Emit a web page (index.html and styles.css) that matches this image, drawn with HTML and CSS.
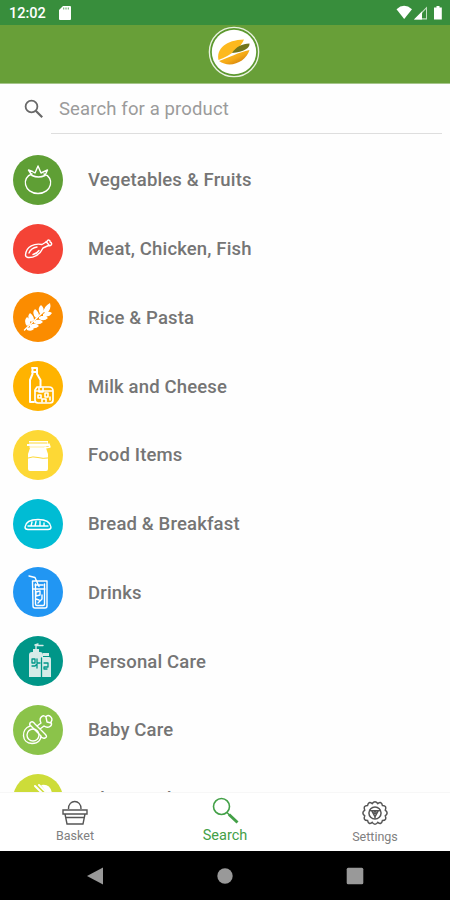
FILE: index.html
```html
<!DOCTYPE html>
<html lang="en">
<head>
<meta charset="utf-8">
<title>Product search</title>
<link rel="stylesheet" href="styles.css">
</head>
<body>
<div class="status">
  <span class="clock">12:02</span>
  <svg class="sd" width="12" height="14" viewBox="0 0 12 14"><path d="M4 0h7q1 0 1 1v12q0 1-1 1H1q-1 0-1-1V4z" fill="#fff"/><path d="M4.7 1.5v2M7 1.5v2M9.3 1.5v2" stroke="#6bab6c" stroke-width="1.1"/></svg>
  <svg class="signals" width="48" height="16" viewBox="0 0 48 16"><path d="M.5 4.2Q8 -2.5 16 4.2L8.2 14z" fill="#fff"/><path d="M18 14.5L31 1.5v13z" fill="#c2dfc2"/><path d="M26 8.2L30 4v9.3h-4z" fill="#388e3c"/><path d="M18 14.5l8-8v8z" fill="#fff"/><path d="M40.500 1h3v1.500h2.300v12h-7.800v-12h2.500z" fill="#fff"/></svg>
</div>
<header class="bar">
  <svg width="52" height="52" viewBox="0 0 52 52">
    <defs><linearGradient id="nut" x1="0" y1="0" x2="1" y2="1"><stop offset="0" stop-color="#ffc62b"/><stop offset=".55" stop-color="#f5a916"/><stop offset="1" stop-color="#b96808"/></linearGradient></defs>
    <circle cx="26" cy="26" r="24.600" fill="#5c982f" stroke="#e9f2e0" stroke-width="1.400"/><circle cx="26" cy="26" r="22.200" fill="#fff"/>
    <path d="M10.500 34C8 23 18 14 36 13.500C33 21 24 29 10.500 34z" fill="#fdb91e"/>
    <path d="M24 27C28 21 34 17.500 41.500 17.500C42 22 36 26 24 27z" fill="#71751c"/>
    <path d="M11 35C20 32 31 26 41.500 24C38 36 22 43 11 35z" fill="url(#nut)"/>
  </svg>
</header>
<main>
  <div class="search">
    <svg width="20" height="20" viewBox="0 0 20 20" fill="none" stroke="#686868"><circle cx="7.500" cy="7.500" r="5.900" stroke-width="1.800"/><path d="M11.700 11.700l6.500 6.500" stroke-width="2.200"/></svg>
    <div class="field">Search for a product</div>
  </div>
  <ul class="list">
    <li><svg class="ic green" viewBox="0 0 50 50"><path d="M19 19C8 22 11 38.500 25 38.500S42 22 31 19M15.500 15l4 1.500 2.500 1.500 3-7 3 7 6.500-3-2.500 5.500q-6.500 3-13 0z"/></svg><span>Vegetables &amp; Fruits</span></li>
    <li><svg class="ic red" viewBox="0 0 50 50"><path d="M12.500 31C13 22 22 19 29 20.500L34 17.500C35 15 37.500 16 37 18C40 19 38.500 22.500 35.500 21.500L30 24C27 31 20 34 15 33.500Q12.500 33 12.500 31zM16 29q2-5 8-6M20 30.500q4-1 6-4M33 17.500l3 3.500"/></svg><span>Meat, Chicken, Fish</span></li>
    <li><svg class="ic orange" viewBox="0 0 50 50"><path d="M11.500 38L33 17"/><g fill="#fff" stroke="none"><path d="M31 20q-1-5 6-9q2 6-4 11zM27 22q-3-6 1-9q4 3 2 8zM23 26q-5-5-1-9q4 3 4 7zM18 30q-5-5-1-9q4 3 4 7zM14 34q-4-5 0-9q4 3 3 7zM30 22q5-4 9-1q-3 5-9 3zM26 25q6-3 9 1q-4 4-9 1zM21 29q6-3 9 1q-4 4-9 1zM17 33q6-3 9 1q-4 4-9 1zM14 36q5-2 7 1q-3 3-7 1z"/></g></svg><span>Rice &amp; Pasta</span></li>
    <li><svg class="ic amber" viewBox="0 0 50 50"><path d="M19 7h5v6l3.500 6v7M21 41h-4V19l2.500-6V7M19 11h5" stroke-width="2"/><path d="M24 26h12q4 0 4 4v9q0 3-3 3H25q-3 0-3-3V29z" stroke-width="1.700"/><path d="M22 30h17M26 27v4h4v-4M25 34h3v3h-3zM32 32v4h3v-4zM29 41v-3h4v3M37 36v3" stroke-width="1.600"/></svg><span>Milk and Cheese</span></li>
    <li><svg class="ic yellow" viewBox="0 0 50 50"><path fill="#fff" stroke="none" d="M16 11h19v4H16zM14 14h22v2H14zM17 18h16l2 6v15q0 2-2 2H17q-2 0-2-2V24z"/><path d="M36 14l1 3-5 1M17 17h16"/><path d="M15 28q5-2 10-.500q5 1.500 10 .500M16 13h18" stroke="#fdd835" stroke-width="1"/></svg><span>Food Items</span></li>
    <li><svg class="ic cyan" viewBox="0 0 50 50"><path d="M12 28q1-7.500 13-7.500t13 7.500q0 2.500-3 2.500H15q-3 0-3-2.500zM15 27h20M18 27l1-4M22 27l1-4.500M27 27v-4.500M31 27v-3"/></svg><span>Bread &amp; Breakfast</span></li>
    <li><svg class="ic blue" viewBox="0 0 50 50"><path d="M19.500 14H34v25q0 2-2 2H22q-2 0-2-2zM22.500 17v20q0 1.500 1.500 1.500h6q1.500 0 1.500-1.500V17M16 9l6 1.500 4 9M20 22h12M23 25l4-1v4l-4 1zM29 28v4l-4 4M23 32l3 1M22 18h8"/></svg><span>Drinks</span></li>
    <li><svg class="ic teal" viewBox="0 0 50 50"><g fill="#d5ebe8" stroke="none"><path d="M16 19q0-3 3-3h8q3 0 3 3v22H16zM20 13h6v3h-6zM28 23q0-2 2-2h6q2 0 2 2v18H28zM30 17h6v3h-6z"/></g><path d="M23 13V9.500h7M22 9l3-1" stroke="#d5ebe8"/><path d="M28.500 22v19M19 23h3v4h-3zM24 23v4h3M19 30h3l2-2v4M31 27h4v4h-4v2h3" stroke="#009688" stroke-width="1.300"/></svg><span>Personal Care</span></li>
    <li><svg class="ic light" viewBox="0 0 50 50"><circle cx="20" cy="30" r="6"/><path d="M17 21C8 24 8 38 19 38.500C26 38.500 28 34 28 31M17 18q2-3 5 1l10 10q3 3 0 4q-3 1-5-3L18 21q-2-1-1-3zM24 21l4-3C25 12 31 9 33 12C35 8 41 13 38 17C40 21 35 24 31 21L27 24M33 12l1 5 4 1"/></svg><span>Baby Care</span></li>
    <li><svg class="ic lime" viewBox="0 0 50 50"><path d="M22 12l8 8M26 11l9 9" stroke-width="2"/><path fill="#fff" stroke="none" d="M28 11q9-2 11 8l-3 2z"/></svg><span>Chips and S</span></li>
  </ul>
</main>
<nav class="tabs">
  <div><svg width="28" height="27" viewBox="0 0 28 27" fill="none" stroke="#555" stroke-width="1.400"><path d="M7.500 10C7 0 20.500 0 20 10M2 11h24v4H2zM4 15l2 10h16l2-10M5 18.500h18"/></svg><span>Basket</span></div>
  <div class="on"><svg width="28" height="28" viewBox="0 0 28 28" fill="none" stroke="#43a047"><circle cx="10.500" cy="9.500" r="8" stroke-width="1.600"/><path d="M16 15.500l3 3" stroke-width="1.500"/><path d="M18 17.500l8.500 8" stroke-width="3"/></svg><span>Search</span></div>
  <div><svg width="28" height="28" viewBox="-1 -1 30 30" fill="none" stroke="#555" stroke-width="1.600"><path d="M11 4q3-4 6 0q4-3 5 2q5 0 3 5q4 3 0 6q2 5-3 5q-1 5-5 2q-3 4-6 0q-4 3-5-2q-5 0-3-5q-4-3 0-6q-2-5 3-5q1-5 5-2z"/><circle cx="14" cy="14" r="6.500"/><path d="M10.500 11.500h7L14 18zM8 11l3 1M20 11l-3 1M14 18v2"/><circle cx="14" cy="13.500" r="1.200"/></svg><span>Settings</span></div>
</nav>
<div class="system">
  <svg width="18" height="18" viewBox="0 0 18 18"><path d="M1 9L17 .500v17z"/></svg>
  <svg width="18" height="18" viewBox="0 0 18 18"><circle cx="9" cy="9" r="7.700"/></svg>
  <svg width="18" height="18" viewBox="0 0 18 18"><rect x=".700" y=".700" width="16.600" height="16.600" rx="1.500"/></svg>
</div>
</body>
</html>
```
FILE: styles.css
```css
* { box-sizing: border-box; }
body { margin: 0; height: 900px; display: flex; flex-direction: column; overflow: hidden; background: #fefefe; font-family: Roboto, sans-serif; }
svg { flex: none; display: block; }
.status { height: 25px; flex: none; display: flex; align-items: center; padding: 1px 7px 0 9px; background: #388e3c; color: #fff; }
.clock { font-size: 14.5px; font-weight: 500; width: 50px; }
.signals { margin-left: auto; margin-right: -1px; }
.bar { height: 59px; flex: none; display: flex; justify-content: center; padding: 1px 0 0 17px; background: #689f38; border-bottom: 1px solid #a5c58a; }
main { flex: 1; min-height: 0; overflow: hidden; }
.search { display: flex; height: 50px; padding: 0 8px 0 24px; }
.search svg { margin-top: 15px; }
.field { flex: 1; margin-left: 7px; padding: 15px 8px 0; font-size: 18.5px; letter-spacing: .13px; line-height: 21px; color: #9b9b9b; border-bottom: 1px solid #dedede; }
.list { list-style: none; margin: 0; padding: 11.6px 0 0 13px; }
.list li { display: flex; align-items: center; height: 68.75px; color: #757575; font-size: 18.5px; font-weight: 500; letter-spacing: .15px; }
.list span { margin-left: 25px; line-height: 22px; padding-top: 1px; }
.ic { width: 50px; height: 50px; border-radius: 50%; fill: none; stroke: #fff; stroke-width: 1.4; stroke-linejoin: round; stroke-linecap: round; }
.green { background: #5f9f35; }
.red { background: #f44336; }
.orange { background: #fb8c00; }
.amber { background: #ffb300; }
.yellow { background: #fdd835; }
.cyan { background: #00bcd4; }
.blue { background: #2196f3; }
.teal { background: #009688; }
.light { background: #8bc34a; }
.lime { background: #cddc39; }
.tabs { height: 59px; flex: none; display: grid; grid-template-columns: repeat(3, 1fr); background: #fff; border-top: 1px solid #f7f7f7; color: #808080; font-size: 12.5px; }
.tabs div { display: flex; flex-direction: column; align-items: center; padding-top: 6px; }
.tabs span { line-height: 16px; margin-top: 2px; }
.tabs .on { padding-top: 4px; font-size: 14.5px; color: #43a047; }
.tabs .on span { margin-top: 3px; }
.system { height: 49px; flex: none; display: grid; grid-template-columns: repeat(3, 1fr); justify-items: center; align-items: center; background: #000; fill: #999; padding: 0 30px; }
```
